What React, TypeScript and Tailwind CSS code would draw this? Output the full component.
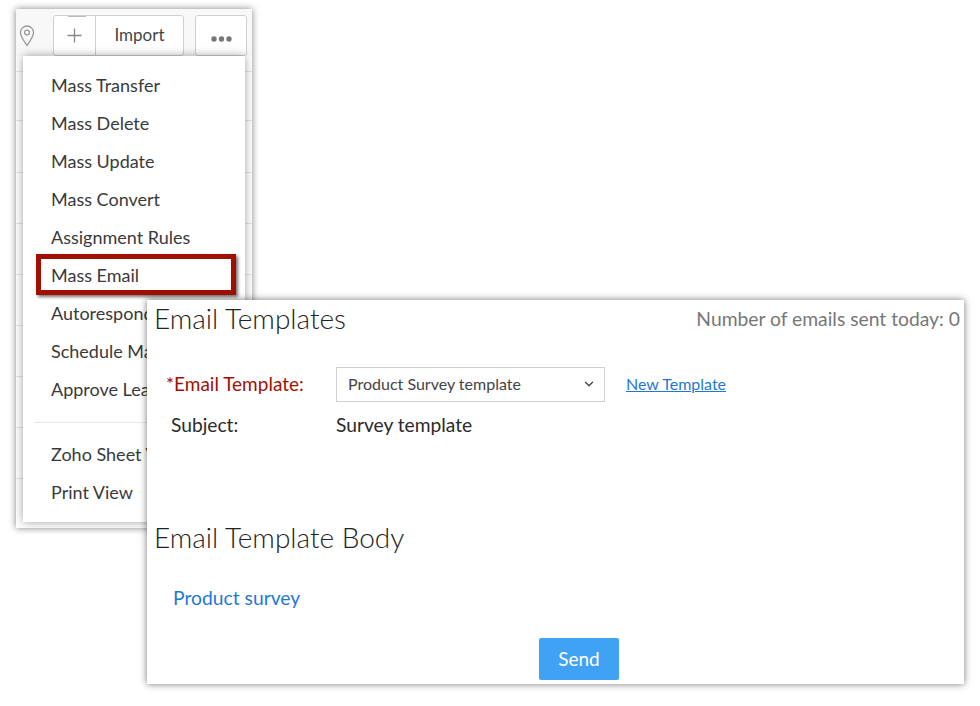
import { ChevronDown } from "lucide-react";

const font = { fontFamily: "Lato, 'Open Sans', sans-serif" };

const groupA = ["Mass Transfer", "Mass Delete", "Mass Update", "Mass Convert", "Assignment Rules", "Mass Email", "Autoresponders", "Schedule Mass Email", "Approve Leads"];
const groupB = ["Zoho Sheet View", "Print View"];
const rowHeights = [16, 49, 52, 51, 51, 51, 51, 51, 51];

function MenuItem({ label }: { label: string }) {
  return (
    <div className="h-[37.9px] pl-[28px] flex items-center text-[18px] text-[#3a3a3a] whitespace-nowrap overflow-hidden">{label}</div>
  );
}

export default function App() {
  return (
    <div className="relative w-[980px] h-[706px] bg-white overflow-hidden" style={font}>
      {/* Back window: list toolbar, rows, and the open menu */}
      <div className="absolute left-[16px] top-[9px] w-[236px] h-[519px] bg-white shadow-[0_0_7px_rgba(0,0,0,0.5)] flex flex-col overflow-hidden">
        <div className="h-[47px] flex items-start shrink-0 bg-[#f8f8f8] px-[3px]">
          <svg width="16" height="22" viewBox="0 0 16 22" className="mt-[16px] shrink-0" fill="none" stroke="#999" strokeWidth="1.3">
            <path d="M8 20.5 C5 15.5 1.5 12 1.5 7.5 a6.5 6.5 0 0 1 13 0 C14.5 12 11 15.5 8 20.5 Z" />
            <circle cx="8" cy="7.5" r="2.4" />
          </svg>
          <div className="relative ml-[18px] mt-[6px] flex shrink-0 h-[41px] w-[131px] rounded-[3px] border border-[#cfcfcf] bg-white">
            <div className="absolute left-[14px] top-0 w-[18px] h-px bg-[#bbbbbb]" />
            <div className="w-[42px] flex items-center justify-center border-r border-[#cfcfcf]">
              <svg width="15" height="15" viewBox="0 0 15 15" stroke="#888" strokeWidth="1.3">
                <path d="M7.5 0.5v14M0.5 7.5h14" />
              </svg>
            </div>
            <div className="flex-1 flex items-center justify-center pb-[2px] text-[17px] text-[#444]">Import</div>
          </div>
          <div className="ml-[11px] mt-[6px] flex shrink-0 items-end justify-center pb-[13px] h-[41px] w-[52px] rounded-[3px] border border-[#cfcfcf] bg-white">
            <svg width="21" height="6" viewBox="0 0 21 6" fill="#777">
              <circle cx="3" cy="3" r="2.7" />
              <circle cx="10.5" cy="3" r="2.7" />
              <circle cx="18" cy="3" r="2.7" />
            </svg>
          </div>
        </div>
        {rowHeights.map((h, i) => (
          <div key={i} className="border-b border-[#e4e4e4] shrink-0" style={{ height: h }} />
        ))}

        <div className="absolute left-[7px] right-[7px] top-[47px] bottom-[6px] bg-white shadow-[0_0_9px_rgba(0,0,0,0.38)] pt-[11px]">
          {groupA.map((l) => (
            <MenuItem key={l} label={l} />
          ))}
          <div className="mt-[14px] mb-[13px] ml-[12px] border-t border-[#e6e6e6]" />
          {groupB.map((l) => (
            <MenuItem key={l} label={l} />
          ))}
        </div>
      </div>

      {/* Highlight over the Mass Email item */}
      <div className="absolute left-[36px] top-[254px] w-[200px] h-[41px] border-[5px] border-[#a01000] shadow-[2px_2px_3px_rgba(0,0,0,0.55)]" />

      {/* Front window: email templates */}
      <div className="absolute left-[147px] top-[300px] w-[817px] h-[384px] bg-white shadow-[0_0_7px_rgba(0,0,0,0.55)] flex flex-col">
        <div className="flex justify-between items-start pl-[7px] pr-[4px]">
          <div className="text-[28px] font-light leading-[37px] text-[#222]">Email Templates</div>
          <div className="text-[19.3px] leading-[38px] text-[#777]">Number of emails sent today: 0</div>
        </div>
        <div className="flex items-center mt-[29px] h-[35px]">
          <div className="w-[189px] pl-[19px] text-[19px] text-[#a01000]">*Email Template:</div>
          <div className="w-[269px] h-[35px] border border-[#cfcfcf] flex items-center justify-between pl-[11px] pr-[8px] pb-[1px] text-[16px] text-[#444]">
            <span>Product Survey template</span>
            <ChevronDown size={14} strokeWidth={2.2} className="text-[#444]" />
          </div>
          <a className="ml-[21px] mb-[1px] text-[16px] text-[#1f78d8] underline">New Template</a>
        </div>
        <div className="flex items-center mt-[7px] h-[32px] text-[19.2px] text-[#2a2a2a]">
          <div className="w-[189px] pl-[24px]">Subject:</div>
          <div>Survey template</div>
        </div>
        <div className="mt-[77px] pl-[7px] text-[28px] font-light leading-[38px] text-[#222]">Email Template Body</div>
        <div className="mt-[26px] pl-[26px] text-[19.3px] leading-[32px] text-[#1f78d8]">Product survey</div>
        <div className="mt-[24px] flex">
          <button className="ml-[392px] w-[80px] h-[42px] rounded-[2px] bg-[#3fa2f2] text-white text-[19px]">Send</button>
        </div>
      </div>
    </div>
  );
}
